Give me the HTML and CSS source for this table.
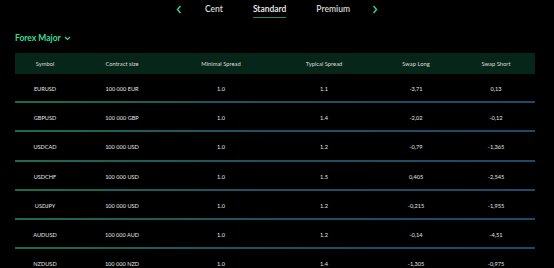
FILE: index.html
```html
<!DOCTYPE html>
<html>
<head>
<meta charset="utf-8">
<link rel="stylesheet" href="styles.css">
</head>
<body>
<nav class="tabs">
  <span class="arrow"><svg width="6" height="9" viewBox="0 0 6 9"><path d="M4.5 1 L1.5 4.5 L4.5 8" fill="none" stroke="#2fd59a" stroke-width="1.4"/></svg></span>
  <span class="tab">Cent</span>
  <span class="tab active">Standard</span>
  <span class="tab">Premium</span>
  <span class="arrow"><svg width="6" height="9" viewBox="0 0 6 9"><path d="M1.5 1 L4.5 4.5 L1.5 8" fill="none" stroke="#2fd59a" stroke-width="1.4"/></svg></span>
</nav>
<div class="group">Forex Major <svg width="7" height="5" viewBox="0 0 7 5"><path d="M1 1 L3.5 3.5 L6 1" fill="none" stroke="#3ddc97" stroke-width="1.1"/></svg></div>
<div class="table">
  <div class="row head">
    <span>Symbol</span><span>Contract size</span><span>Minimal Spread</span><span>Typical Spread</span><span>Swap Long</span><span>Swap Short</span>
  </div>
  <div class="row"><span>EURUSD</span><span>100 000 EUR</span><span>1.0</span><span>1.1</span><span>-3,71</span><span>0,13</span></div>
  <div class="row"><span>GBPUSD</span><span>100 000 GBP</span><span>1.0</span><span>1.4</span><span>-2,02</span><span>-0,12</span></div>
  <div class="row"><span>USDCAD</span><span>100 000 USD</span><span>1.0</span><span>1.2</span><span>-0,79</span><span>-1,365</span></div>
  <div class="row"><span>USDCHF</span><span>100 000 USD</span><span>1.0</span><span>1.5</span><span>0,405</span><span>-2,545</span></div>
  <div class="row"><span>USDJPY</span><span>100 000 USD</span><span>1.0</span><span>1.2</span><span>-0,215</span><span>-1,955</span></div>
  <div class="row"><span>AUDUSD</span><span>100 000 AUD</span><span>1.0</span><span>1.2</span><span>-0,14</span><span>-4,51</span></div>
  <div class="row last"><span>NZDUSD</span><span>100 000 NZD</span><span>1.0</span><span>1.4</span><span>-1,305</span><span>-0,975</span></div>
</div>
</body>
</html>
```
FILE: styles.css
```css
html, body {
  margin: 0;
  padding: 0;
  background: #000;
  color: #e8e8e8;
  font-family: Lato, "Noto Sans", sans-serif;
  overflow: hidden;
}
.tabs {
  display: flex;
  justify-content: center;
  align-items: center;
  height: 18px;
}
.arrow {
  display: flex;
  align-items: center;
  width: 6px;
  height: 18px;
}
.arrow:first-child { margin-right: 8px; }
.arrow:last-child { margin-left: 7px; }
.tab {
  font-size: 8.5px;
  font-weight: 600;
  line-height: 18px;
  color: #d8d8d8;
  margin: 0 15px;
  position: relative;
}
.tab.active {
  color: #f2f2f2;
  border-bottom: 1px solid #2a8a68;
  line-height: 15px;
  margin-top: 2px;
}
.group {
  margin: 13px 0 0 15px;
  height: 14px;
  display: flex;
  align-items: center;
  gap: 3px;
  font-size: 8.5px;
  font-weight: 700;
  color: #3ddc97;
}
.table {
  margin: 8px 19px 0 15px;
}
.row {
  display: grid;
  grid-template-columns: 60px 94px 104px 102px 82px 78px;
  height: 27.2px;
  align-items: center;
  border-bottom: 2px solid transparent;
  border-image: linear-gradient(90deg, #1d6b50, #1e5060 50%, #1d4a68) 1;
  font-size: 5.6px;
  color: #e6e6e6;
}
.row span { text-align: center; padding-top: 2px; }
.row.head {
  height: 21px;
  background: #06261a;
  border: none;
  font-size: 5.8px;
  color: #dcdcdc;
}
.row.head span { padding-top: 0; }
.row.last { border-bottom: none; }
```
